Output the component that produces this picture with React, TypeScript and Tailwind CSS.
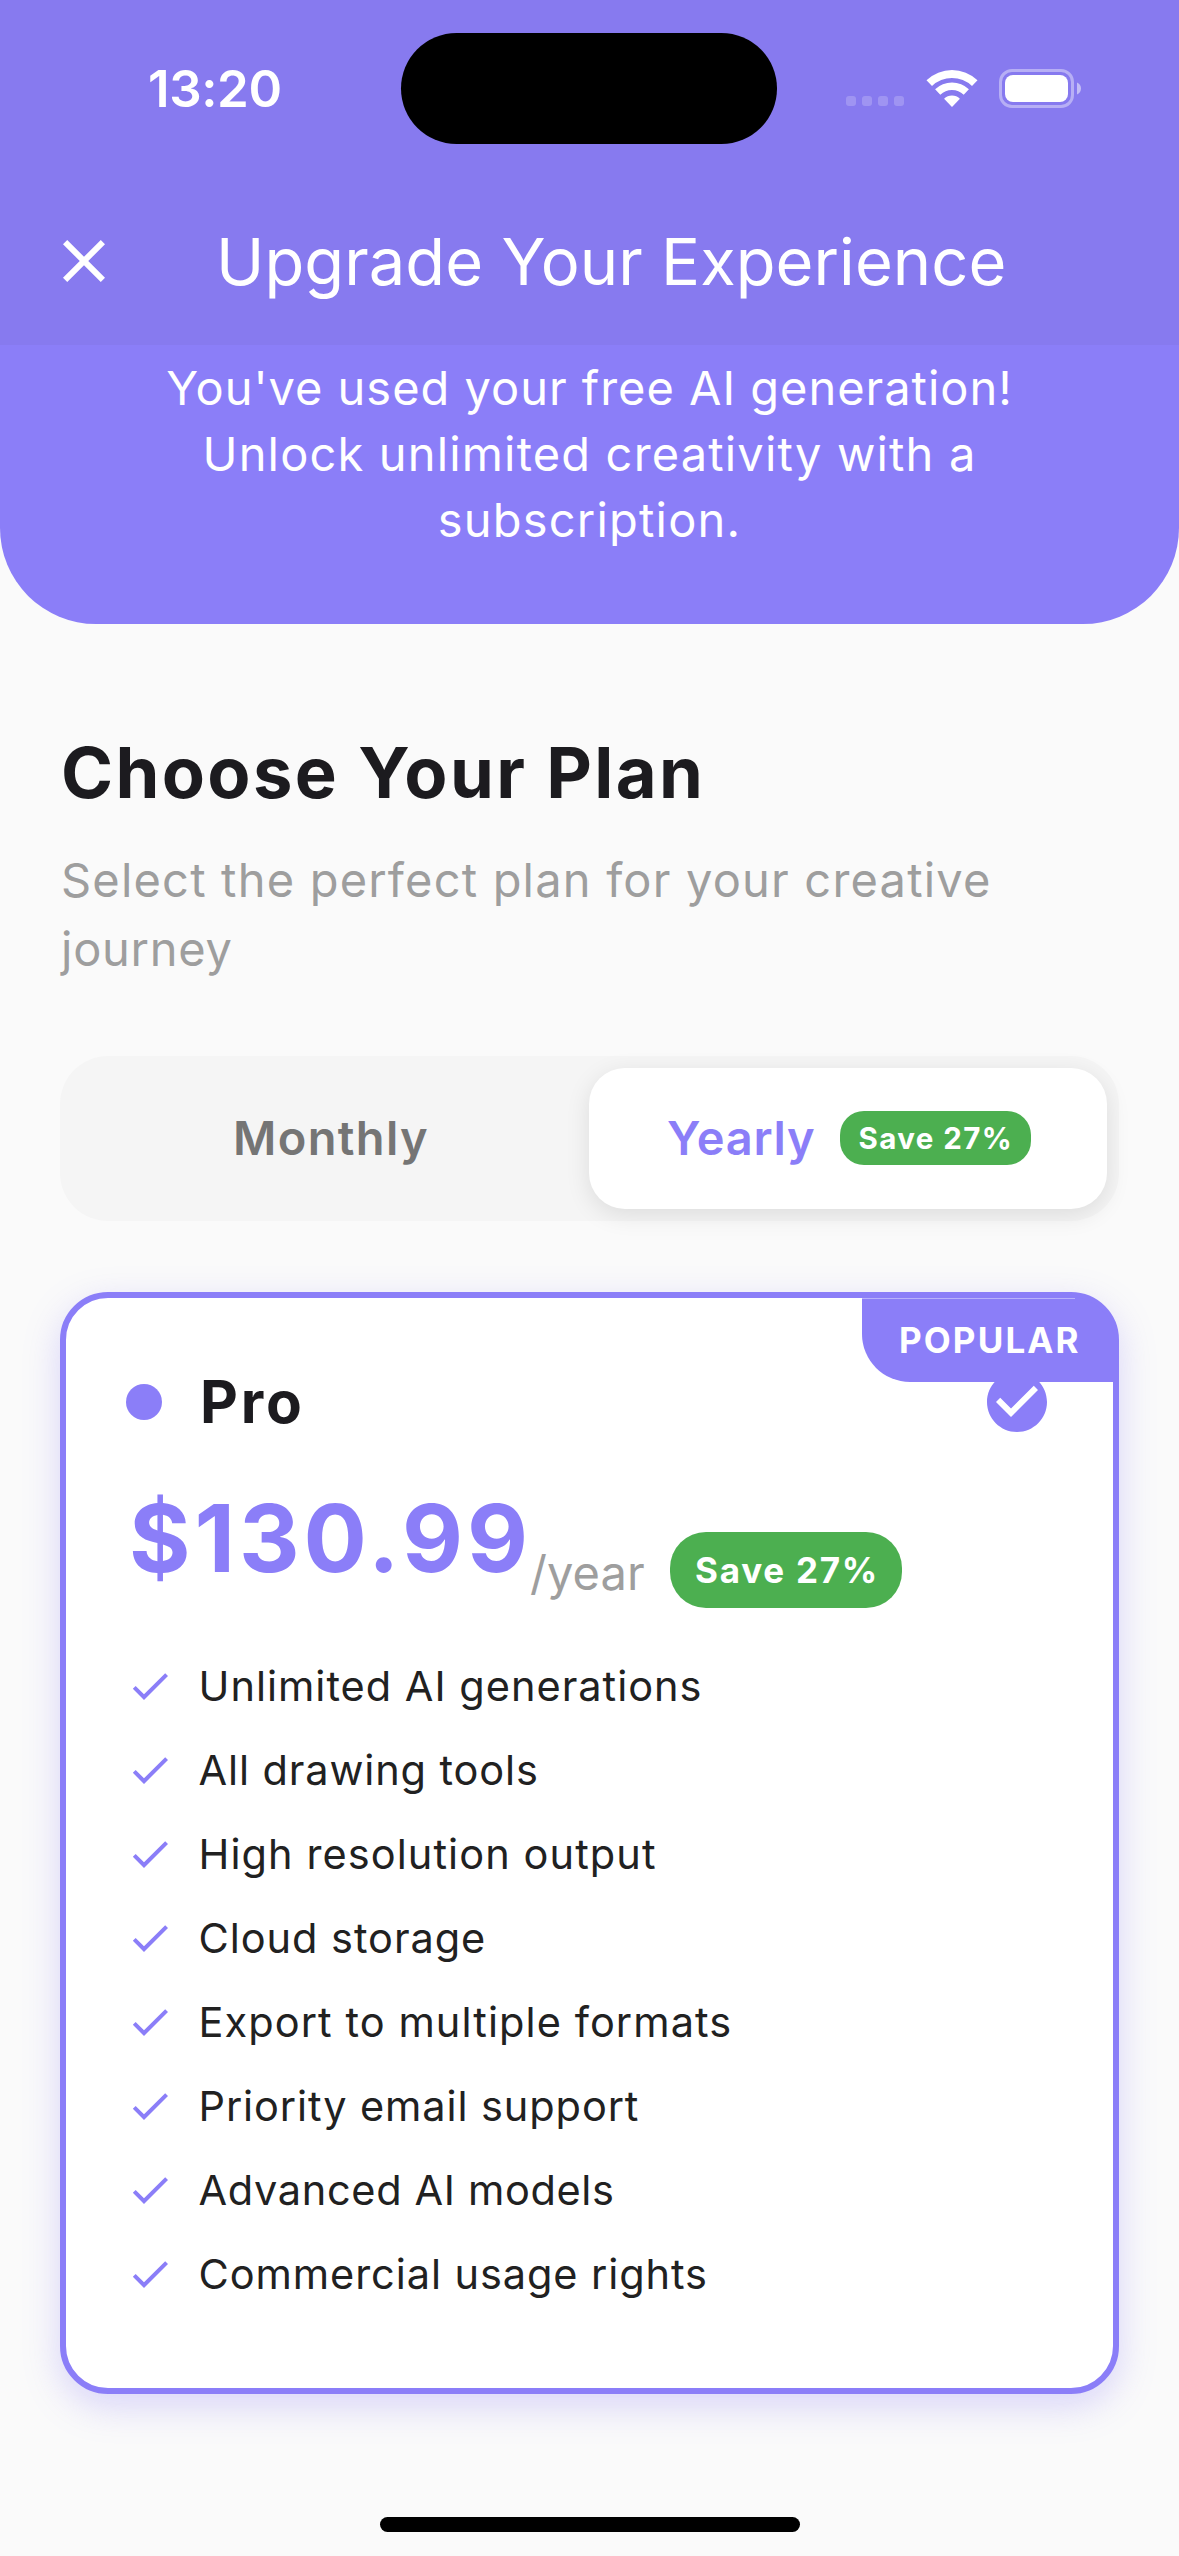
const features = [
  { label: "Unlimited AI generations", tracking: "tracking-[1px]" },
  { label: "All drawing tools", tracking: "tracking-[0.88px]" },
  { label: "High resolution output", tracking: "tracking-[1.08px]" },
  { label: "Cloud storage", tracking: "tracking-[0.95px]" },
  { label: "Export to multiple formats", tracking: "tracking-[1.08px]" },
  { label: "Priority email support", tracking: "tracking-[0.9px]" },
  { label: "Advanced AI models", tracking: "tracking-[0.65px]" },
  { label: "Commercial usage rights", tracking: "tracking-[0.92px]" },
];

function StatusBar() {
  return (
    <div className="flex h-[177px] items-center">
      <div className="w-[401px] pl-[148px] text-[51px] leading-[60px] font-semibold tracking-[-0.4px]">13:20</div>
      <div className="h-[111px] w-[376px] rounded-full bg-black" />
      <div className="flex items-center pl-[69px]">
        <div className="mt-[25px] flex gap-[6px]">
          {[0, 1, 2, 3].map((i) => (
            <span key={i} className="size-[10px] rounded-[3px] bg-white/20" />
          ))}
        </div>
        <svg className="ml-[22px] h-[38px] w-[52px]" viewBox="-1 0 52 38" fill="white">
          <path d="M-.5 10.2A37 37 0 0 1 50.5 10.2L45 16A29 29 0 0 0 5 16Z" />
          <path d="M8.1 19.3A24.5 24.5 0 0 1 41.9 19.3L36.7 24.7A17 17 0 0 0 13.3 24.7Z" />
          <path d="M17.1 28.7A11.5 11.5 0 0 1 32.9 28.7L25 37Z" />
        </svg>
        <svg className="ml-[21px] h-[39px] w-[83px]" viewBox="0 0 83 39" fill="none">
          <rect x="1.5" y="1.5" width="72" height="36" rx="11.5" stroke="white" strokeOpacity=".4" strokeWidth="3" />
          <rect x="6" y="6" width="63" height="27" rx="8" fill="white" />
          <path d="M78 13.5C80.4 14.3 82 16.7 82 19.5C82 22.3 80.4 24.7 78 25.5Z" fill="white" fillOpacity=".5" />
        </svg>
      </div>
    </div>
  );
}

function PlanToggle() {
  return (
    <div className="mt-[73px] flex h-[165px] rounded-[48px] bg-[#f5f5f5] p-3">
      <div className="flex w-[517px] items-center pl-[161px] text-[47px] font-semibold tracking-[1.35px] text-[#757575]">
        Monthly
      </div>
      <div className="flex w-[518px] items-center rounded-[36px] bg-white pl-[78px] shadow-[0_6px_24px_rgba(0,0,0,0.1)]">
        <span className="w-[173px] text-[47px] font-semibold tracking-[0.76px] text-[#8b7ef8]">Yearly</span>
        <span className="-mt-px flex h-[54px] w-[191px] items-center rounded-[24px] bg-[#4caf50] pt-px pl-[18.5px] text-[29.5px] font-bold tracking-[1.4px] text-white">
          Save 27%
        </span>
      </div>
    </div>
  );
}

function ProCard() {
  return (
    <div className="relative mt-[71px] h-[1102px] rounded-[48px] border-6 border-[#8b7ef8] bg-white px-[60px] pt-[68px] shadow-[0_12px_36px_rgba(139,126,248,0.3)]">
      <div className="flex h-[72px] items-center">
        <span className="size-9 rounded-full bg-[#8b7ef8]" />
        <span className="-mt-px ml-[38px] text-[58.5px] leading-[72px] font-bold tracking-[2.9px] text-[#1c1b1f]">Pro</span>
        <svg className="ml-auto size-[72px]" viewBox="0 0 24 24" fill="#8b7ef8">
          <path d="M12 2C6.48 2 2 6.48 2 12s4.48 10 10 10 10-4.48 10-10S17.52 2 12 2zm-2 15l-5-5 1.41-1.41L10 14.17l7.59-7.59L19 8l-9 9z" />
        </svg>
      </div>
      <div className="mt-[52px] flex h-[118px] items-end pl-[3px]">
        <span className="mb-[22px] w-[401px] text-[94px] leading-[96px] font-bold tracking-[3.9px] text-[#8b7ef8]">
          $130.99
        </span>
        <span className="mb-[11px] w-[140px] text-[47px] leading-[48px] tracking-[0.08px] text-[#9e9e9e]">/year</span>
        <span className="flex h-[76px] w-[232px] items-center rounded-[36px] bg-[#4caf50] pt-px pl-[25px] text-[35px] font-bold tracking-[1.75px] text-white">
          Save 27%
        </span>
      </div>
      <ul className="mt-[54px] flex flex-col gap-9">
        {features.map(({ label, tracking }) => (
          <li key={label} className="flex h-12 items-center gap-[24.5px]">
            <svg className="size-12" viewBox="0 0 24 24" fill="#8b7ef8">
              <path d="M9 16.17L4.83 12l-1.42 1.41L9 19 21 7l-1.41-1.41z" />
            </svg>
            <span className={`text-[41.5px] leading-[48px] text-[#212121] ${tracking}`}>{label}</span>
          </li>
        ))}
      </ul>
      <div className="absolute -top-px -right-px flex h-[85px] w-[252.5px] items-center rounded-tr-[43px] rounded-bl-[48px] bg-[#8b7ef8] pt-[2px] pl-[37.5px] text-[35px] font-bold tracking-[2.11px] text-white">
        <span className="absolute top-px right-[39px] left-0 h-px bg-white/40" />
        POPULAR
      </div>
    </div>
  );
}

export default function App() {
  return (
    <div className="flex h-[2556px] w-[1179px] flex-col overflow-hidden bg-[#fafafa] font-['Inter',sans-serif]">
      <header className="h-[345px] bg-[#877aef] text-white">
        <StatusBar />
        <div className="flex h-[168px] items-center pl-12">
          <svg className="size-[72px]" viewBox="0 0 24 24" fill="white">
            <path d="M19 6.41L17.59 5 12 10.59 6.41 5 5 6.41 10.59 12 5 17.59 6.41 19 12 13.41 17.59 19 19 17.59 13.41 12z" />
          </svg>
          <h1 className="mt-[2px] ml-[96px] text-[65px] leading-[78px] tracking-[0.06px]">Upgrade Your Experience</h1>
        </div>
      </header>
      <section className="h-[279px] rounded-b-[96px] bg-[#8b7ef8] pt-[10px] text-center text-[47px] leading-[66px] text-white">
        <p className="tracking-[0.98px]">You've used your free AI generation!</p>
        <p className="tracking-[1.16px]">Unlock unlimited creativity with a</p>
        <p className="tracking-[1.2px]">subscription.</p>
      </section>
      <main className="px-[60px] pt-[106px]">
        <h2 className="pl-px text-[70.5px] leading-[86px] font-bold tracking-[2.35px] text-[#1c1b1f]">Choose Your Plan</h2>
        <p className="mt-[29px] pl-px text-[47px] leading-[69px] tracking-[1.19px] text-[#9e9e9e]">
          Select the perfect plan for your creative
          <br />
          <span className="tracking-[0.75px]">journey</span>
        </p>
        <PlanToggle />
        <ProCard />
      </main>
      <div className="mx-auto mt-auto mb-[24px] h-[15px] w-[420px] rounded-full bg-black" />
    </div>
  );
}
